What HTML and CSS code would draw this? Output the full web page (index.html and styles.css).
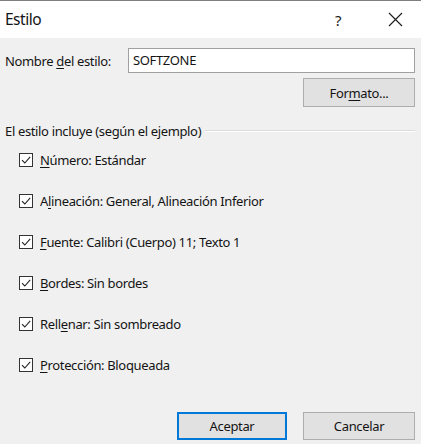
FILE: index.html
```html
<!DOCTYPE html>
<html lang="es">
<head>
<meta charset="utf-8">
<title>Estilo</title>
<link rel="stylesheet" href="styles.css">
</head>
<body>
<div class="dialog">
  <div class="titlebar">
    <span class="title">Estilo</span>
    <span class="help">?</span>
    <span class="close">
      <svg width="15" height="15" viewBox="0 0 15 15"><path d="M1 1 L14 14 M14 1 L1 14" stroke="#1a1a1a" stroke-width="1.1" fill="none"/></svg>
    </span>
  </div>
  <div class="content">
    <div class="name-row">
      <label class="name-label">Nombre <u>d</u>el estilo:</label>
      <div class="input">SOFTZONE</div>
    </div>
    <div class="format-row">
      <button class="btn">For<u>m</u>ato...</button>
    </div>
    <div class="group-header">
      <span class="group-title">El estilo incluye (según el ejemplo)</span>
      <span class="group-line"></span>
    </div>
    <ul class="checks">
      <li class="check"><span class="box"><svg width="12" height="12" viewBox="0 0 12 12"><path d="M2 6.2 L4.8 9 L10.2 2.8" stroke="#222" stroke-width="1.1" fill="none"/></svg></span><span><u>N</u>úmero: Estándar</span></li>
      <li class="check"><span class="box"><svg width="12" height="12" viewBox="0 0 12 12"><path d="M2 6.2 L4.8 9 L10.2 2.8" stroke="#222" stroke-width="1.1" fill="none"/></svg></span><span>A<u>l</u>ineación: General, Alineación Inferior</span></li>
      <li class="check"><span class="box"><svg width="12" height="12" viewBox="0 0 12 12"><path d="M2 6.2 L4.8 9 L10.2 2.8" stroke="#222" stroke-width="1.1" fill="none"/></svg></span><span><u>F</u>uente: Calibri (Cuerpo) 11; Texto 1</span></li>
      <li class="check"><span class="box"><svg width="12" height="12" viewBox="0 0 12 12"><path d="M2 6.2 L4.8 9 L10.2 2.8" stroke="#222" stroke-width="1.1" fill="none"/></svg></span><span><u>B</u>ordes: Sin bordes</span></li>
      <li class="check"><span class="box"><svg width="12" height="12" viewBox="0 0 12 12"><path d="M2 6.2 L4.8 9 L10.2 2.8" stroke="#222" stroke-width="1.1" fill="none"/></svg></span><span>Rell<u>e</u>nar: Sin sombreado</span></li>
      <li class="check"><span class="box"><svg width="12" height="12" viewBox="0 0 12 12"><path d="M2 6.2 L4.8 9 L10.2 2.8" stroke="#222" stroke-width="1.1" fill="none"/></svg></span><span><u>P</u>rotección: Bloqueada</span></li>
    </ul>
    <div class="footer">
      <button class="btn btn-default">Aceptar</button>
      <button class="btn">Cancelar</button>
    </div>
  </div>
</div>
</body>
</html>
```

FILE: styles.css
```css
* { box-sizing: border-box; }
html, body { margin: 0; padding: 0; }
body {
  background: #f0f0f0;
  font-family: "Noto Sans", "Open Sans", sans-serif;
  font-size: 13px;
  letter-spacing: -0.35px;
  color: #141414;
  width: 421px;
  height: 444px;
  overflow: hidden;
}
u { text-decoration: underline; text-underline-offset: 2px; text-decoration-thickness: 1px; }
.dialog { display: flex; flex-direction: column; }
.titlebar {
  height: 38px;
  background: #ffffff;
  border-top: 1px solid #7f7f7f;
  display: flex;
  align-items: center;
  padding-left: 5px;
}
.title { font-size: 15.5px; letter-spacing: -0.5px; flex: 1; padding-bottom: 1px; }
.help { font-size: 15px; width: 16px; margin-right: 36px; color: #1a1a1a; }
.close { width: 34px; display: flex; align-items: center; padding-left: 1px; padding-bottom: 1px; }
.content { display: flex; flex-direction: column; padding: 10px 6px 0 5px; }
.name-row { display: flex; align-items: center; height: 25px; }
.name-label { width: 123px; }
.input {
  flex: 1;
  height: 25px;
  background: #fff;
  border: 1px solid #a0a0a0;
  padding: 3px 4px;
  line-height: 17px;
}
.format-row { display: flex; justify-content: flex-end; margin-top: 5px; }
.btn {
  font: inherit;
  letter-spacing: inherit;
  color: #141414;
  background: #e1e1e1;
  border: 1px solid #adadad;
  width: 112px;
  height: 29px;
  padding: 0;
  margin: 0;
}
.group-header { display: flex; align-items: center; margin-top: 16px; height: 16px; }
.group-title { white-space: nowrap; padding-right: 4px; }
.group-line { flex: 1; height: 2px; border-top: 1px solid #dcdcdc; border-bottom: 1px solid #ffffff; }
.checks { list-style: none; margin: 0; padding: 0 0 0 14px; }
.check { display: flex; align-items: center; height: 41px; gap: 7px; }
.box {
  width: 14px; height: 14px;
  border: 1px solid #333;
  background: #fff;
  display: flex; align-items: center; justify-content: center;
}
.footer { display: flex; justify-content: flex-end; gap: 16px; margin-top: 27px; }
.footer .btn { width: 112px; height: 28px; }
.btn-default { border: 2px solid #0078d7; width: 110px !important; }
```
